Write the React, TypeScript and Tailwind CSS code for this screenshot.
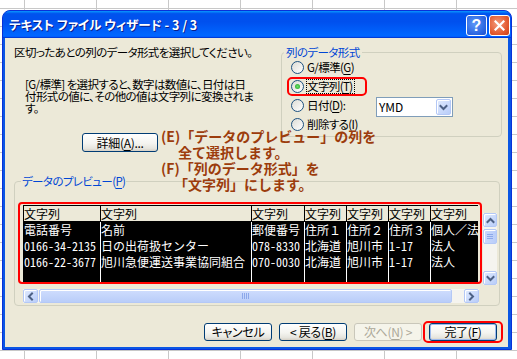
import React from "react";

const U = ({ children }: { children: React.ReactNode }) => (
  <span className="underline decoration-1 underline-offset-[2px]">{children}</span>
);

type Dir = "up" | "down" | "left" | "right";
const chevronPaths: Record<Dir, string> = {
  down: "M2.5 4 L5.5 7 L8.5 4",
  up: "M2.5 7 L5.5 4 L8.5 7",
  left: "M7 2.5 L4 5.5 L7 8.5",
  right: "M4 2.5 L7 5.5 L4 8.5",
};

function Chevron({ dir }: { dir: Dir }) {
  return (
    <svg width="11" height="11" viewBox="0 0 11 11">
      <path d={chevronPaths[dir]} fill="none" stroke="#4D6185" strokeWidth="2" strokeLinecap="square" />
    </svg>
  );
}

function ScrollBtn({ dir, className }: { dir: Dir; className: string }) {
  return (
    <div
      className={`flex shrink-0 items-center justify-center rounded-[2px] border border-[#B4C8F6] bg-[linear-gradient(135deg,#E0EAFE,#B9CDF9)] shadow-[inset_1px_1px_0_#FFFFFF] ${className}`}
    >
      <Chevron dir={dir} />
    </div>
  );
}

function Radio({ checked }: { checked?: boolean }) {
  return (
    <span className="flex h-[13px] w-[13px] shrink-0 items-center justify-center rounded-full border border-[#1C5180] bg-[linear-gradient(135deg,#DCDCD5,#FFFFFF)]">
      {checked && <span className="h-[5px] w-[5px] rounded-full bg-[radial-gradient(circle,#6BE26B,#21A121)]" />}
    </span>
  );
}

const xpBtn =
  "flex shrink-0 items-center justify-center rounded-[3px] border border-[#003C74] bg-[linear-gradient(to_bottom,#FFFFFF_0%,#F4F4F0_55%,#E6E5DE_85%,#D6D0C5_100%)] text-[12px] leading-none text-black tracking-[-0.3px]";

const cols = [
  { w: "w-[77px]", rows: ["電話番号", "0166-34-2135", "0166-22-3677"] },
  { w: "w-[151px]", rows: ["名前", "日の出荷扱センター", "旭川急便運送事業協同組合"] },
  { w: "w-[53px]", rows: ["郵便番号", "078-8330", "070-0030"] },
  { w: "w-[42px]", rows: ["住所１", "北海道", "北海道"] },
  { w: "w-[42px]", rows: ["住所２", "旭川市", "旭川市"] },
  { w: "w-[42px]", rows: ["住所３", "1-17", "1-17"] },
  { w: "w-[80px]", rows: ["個人／法人", "法人", "法人"] },
];

const isAscii = (s: string) => /^[\x00-\x7f]+$/.test(s);

export default function App() {
  return (
    <div className="relative h-[359px] w-[517px] overflow-hidden bg-white bg-[linear-gradient(to_right,#C8C8C8_1px,transparent_1px),linear-gradient(to_bottom,#C8C8C8_1px,transparent_1px)] bg-[size:72px_18px] bg-[position:24px_8px] font-['Noto_Sans_CJK_JP',sans-serif] [font-feature-settings:'palt']">
      <div className="absolute left-[2px] top-[10px] flex h-[340px] w-[510px] flex-col overflow-hidden rounded-t-[8px] border border-[#0831D9] bg-[#0A56E4]">
        {/* Title bar */}
        <div className="flex h-[27px] shrink-0 items-start bg-[linear-gradient(to_bottom,#0997FF_0%,#0053EE_10%,#0050EE_40%,#0066FF_88%,#0066FF_93%,#005BFF_95%,#003DD7_97%,#003DD7_100%)] pl-[6px] pr-[1px]">
          <span className="mt-[7px] flex-1 whitespace-nowrap text-[12.5px] font-bold leading-[14px] text-white [text-shadow:1px_1px_0_#0A1E8C]">
            テキスト ファイル ウィザード - 3 / 3
          </span>
          <div className="mt-[4px] flex gap-[2px]">
            <div className="flex h-[21px] w-[21px] items-center justify-center rounded-[3px] border border-white bg-[radial-gradient(circle_at_40%_40%,#5C97F8,#2A64E0_70%,#1F50C8)] font-['Liberation_Sans',sans-serif] text-[16px] font-bold leading-none text-white">
              ?
            </div>
            <div className="flex h-[21px] w-[21px] items-center justify-center rounded-[3px] border border-white bg-[radial-gradient(circle_at_40%_40%,#F49B7C,#E2582E_65%,#C83F18)]">
              <svg width="11" height="11" viewBox="0 0 11 11">
                <path d="M1.5 1.5 L9.5 9.5 M9.5 1.5 L1.5 9.5" stroke="#FFFFFF" strokeWidth="2.2" strokeLinecap="square" />
              </svg>
            </div>
          </div>
        </div>

        {/* Content */}
        <div className="relative mb-[2px] ml-[2px] mr-[3px] flex flex-1 flex-col bg-[#ECE9D8] pl-[9px] text-[11.5px] tracking-[-0.6px] text-black">
          {/* Top row */}
          <div className="flex pt-[8px]">
            <div className="w-[267px] shrink-0">
              <p className="whitespace-nowrap leading-[13px]">区切ったあとの列のデータ形式を選択してください。</p>
              <div className="ml-[11px] mt-[19px] whitespace-nowrap leading-[12px]">
                <p>[G/標準] を選択すると、数字は数値に、日付は日</p>
                <p>付形式の値に、その他の値は文字列に変換されま</p>
                <p>す。</p>
              </div>
              <button className={`${xpBtn} ml-[68px] mt-[19px] h-[19px] w-[76px]`}>
                詳細(<U>A</U>)...
              </button>
            </div>
            <fieldset className="h-fit w-[221px] rounded-[4px] border border-[#D0D0BF] pb-[2px]">
              <legend className="ml-[2px] px-[2px] leading-[13px] text-[#0046D5]">列のデータ形式</legend>
              <div className="-mt-[1px] flex h-[19px] items-center pl-[9px]">
                <Radio />
                <span className="ml-[3px] leading-[13px]">
                  G/標準(<U>G</U>)
                </span>
              </div>
              <div className="relative flex h-[19px] items-center pl-[9px]">
                <Radio checked />
                <span className="ml-[2px] border border-dotted border-black pr-[1px] leading-[13px]">
                  文字列(<U>T</U>)
                </span>
                <div className="absolute left-[5px] top-0 h-[19px] w-[80px] rounded-[5px] border-2 border-[#FF0000]" />
              </div>
              <div className="flex h-[19px] items-center pl-[9px]">
                <Radio />
                <span className="ml-[3px] w-[69px] leading-[13px]">
                  日付(<U>D</U>):
                </span>
                <div className="mt-[3px] flex h-[20px] w-[77px] items-center border border-[#7F9DB9] bg-white pl-[2px] tracking-normal">
                  <span className="flex-1 text-[12px] leading-none">YMD</span>
                  <div className="mr-[1px] flex h-[16px] w-[15px] items-center justify-center rounded-[2px] border border-[#B4C8F6] bg-[linear-gradient(135deg,#E0EAFE,#B9CDF9)] shadow-[inset_1px_1px_0_#FFFFFF]">
                    <Chevron dir="down" />
                  </div>
                </div>
              </div>
              <div className="flex h-[19px] items-center pl-[9px]">
                <Radio />
                <span className="ml-[3px] leading-[13px]">
                  削除する(<U>I</U>)
                </span>
              </div>
            </fieldset>
          </div>

          {/* Preview group */}
          <fieldset className="mt-[23px] w-[486px] rounded-[4px] border border-[#D0D0BF] pb-[2px] pl-[3px]">
            <legend className="ml-[3px] px-[1px] leading-[13px] text-[#0046D5]">
              データのプレビュー(<U>P</U>)
            </legend>
            <div className="mt-[14px] flex items-start">
              <div className="h-[82px] w-[464px] shrink-0 rounded-[4px] border-2 border-[#FF0000] pl-[3px] pr-[2px] pt-[1px]">
                <div className="flex h-[77px] w-[455px] overflow-hidden border-l border-black bg-black text-[12px] tracking-normal [font-feature-settings:normal]">
                  {cols.map((c, i) => (
                    <div key={i} className={`flex shrink-0 flex-col ${c.w}`}>
                      <div className="h-[17px] shrink-0 whitespace-nowrap border-b border-r border-t border-black bg-[#ECE9D8] leading-[16px] text-black">
                        文字列
                      </div>
                      <div className="flex-1 overflow-hidden border-r border-white text-white">
                        {c.rows.map((r, j) => (
                          <div
                            key={j}
                            className={`whitespace-nowrap leading-[16px] ${isAscii(r) ? "[font-feature-settings:'hwid']" : ""}`}
                          >
                            {r}
                          </div>
                        ))}
                      </div>
                    </div>
                  ))}
                </div>
              </div>
              <div className="ml-[1px] mt-[11px] flex h-[72px] w-[14px] shrink-0 flex-col bg-[#F5F4EF]">
                <ScrollBtn dir="up" className="h-[14px] w-[14px]" />
                <div className="mt-[2px] flex h-[15px] w-[14px] flex-col items-center justify-center gap-[1px] rounded-[2px] border border-[#B4C8F6] bg-[linear-gradient(90deg,#CAD9FD,#B9CDF9)] shadow-[inset_1px_1px_0_#FFFFFF]">
                  <span className="h-[1px] w-[6px] bg-[#8CA8EA]" />
                  <span className="h-[1px] w-[6px] bg-[#8CA8EA]" />
                  <span className="h-[1px] w-[6px] bg-[#8CA8EA]" />
                </div>
                <div className="flex-1" />
                <ScrollBtn dir="down" className="h-[14px] w-[14px]" />
              </div>
            </div>
            <div className="ml-[5px] mt-[4px] flex h-[14px] w-[456px] bg-[#F5F4EF]">
              <ScrollBtn dir="left" className="h-[14px] w-[15px]" />
              <div className="ml-[1px] flex h-[14px] w-[413px] items-center justify-center gap-[1px] rounded-[2px] border border-[#B4C8F6] bg-[linear-gradient(to_bottom,#CFDDFD,#B9CDF9)] shadow-[inset_1px_1px_0_#FFFFFF]">
                <span className="h-[6px] w-[1px] bg-[#8CA8EA]" />
                <span className="h-[6px] w-[1px] bg-[#8CA8EA]" />
                <span className="h-[6px] w-[1px] bg-[#8CA8EA]" />
                <span className="h-[6px] w-[1px] bg-[#8CA8EA]" />
              </div>
              <div className="flex-1" />
              <ScrollBtn dir="right" className="h-[14px] w-[15px]" />
            </div>
          </fieldset>

          {/* Bottom buttons */}
          <div className="mt-[17px] flex justify-end gap-[7px] pr-[11px]">
            <button className={`${xpBtn} h-[18px] w-[68px]`}>キャンセル</button>
            <button className={`${xpBtn} h-[18px] w-[68px]`}>
              &lt; 戻る(<U>B</U>)
            </button>
            <button className="flex h-[18px] w-[68px] shrink-0 items-center justify-center rounded-[3px] border border-[#C9C7BA] bg-[#F5F4EA] text-[12px] leading-none tracking-[-0.3px] text-[#ACA899]">
              次へ(<U>N</U>) &gt;
            </button>
            <div className="relative">
              <button className={`${xpBtn} h-[18px] w-[68px] shadow-[inset_0_0_0_1px_#9DBAEE]`}>
                完了(<U>F</U>)
              </button>
              <div className="absolute -left-[6px] -top-[2px] h-[22px] w-[80px] rounded-[5px] border-2 border-[#FF0000]" />
            </div>
          </div>

          {/* Annotation */}
          <div className="absolute left-[156px] top-[90px] text-[14px] font-bold leading-[16px] tracking-normal text-[#9C3C0C] [font-feature-settings:normal]">
            <p className="whitespace-nowrap">(E)「データのプレビュー」の列を</p>
            <p className="ml-[17px] whitespace-nowrap">全て選択します。</p>
            <p className="whitespace-nowrap">(F)「列のデータ形式」を</p>
            <p className="ml-[13px] whitespace-nowrap">「文字列」にします。</p>
          </div>
        </div>
      </div>
    </div>
  );
}
